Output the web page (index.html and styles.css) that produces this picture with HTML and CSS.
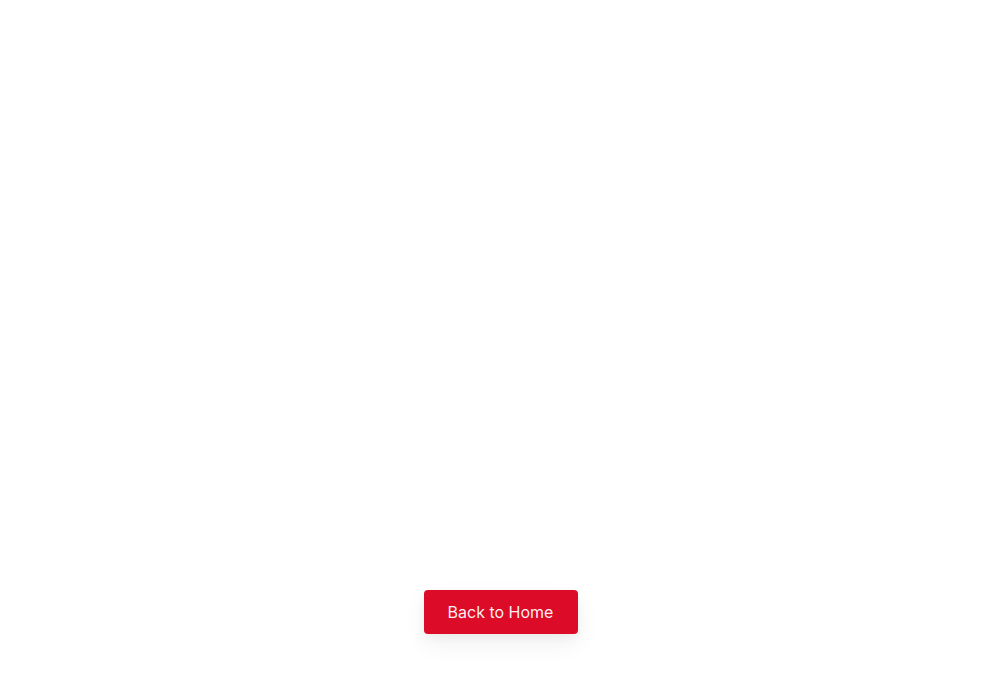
FILE: index.html
```html
<!DOCTYPE html>
<html lang="en">
<head>
<meta charset="utf-8">
<title>Not Found</title>
<link rel="stylesheet" href="styles.css">
</head>
<body>
<main class="page">
  <div class="spacer"></div>
  <a class="home-btn" href="#">Back to Home</a>
</main>
</body>
</html>
```
FILE: styles.css
```css
* { box-sizing: border-box; }
html, body { margin: 0; padding: 0; height: 100%; }
body {
  background: #ffffff;
  font-family: Inter, "Noto Sans", sans-serif;
}
.page {
  min-height: 100vh;
  display: flex;
  flex-direction: column;
  align-items: center;
  justify-content: flex-end;
  padding-bottom: 40px;
}
.spacer { flex: 1; }
.home-btn {
  display: inline-flex;
  align-items: center;
  justify-content: center;
  width: 154px;
  height: 44px;
  background: #dc0b28;
  color: rgba(255,255,255,0.94);
  font-size: 16px;
  font-weight: 400;
  text-decoration: none;
  border-radius: 4px;
  box-shadow: 0 10px 25px rgba(0,0,0,0.06), 0 4px 10px rgba(0,0,0,0.04);
}
```
